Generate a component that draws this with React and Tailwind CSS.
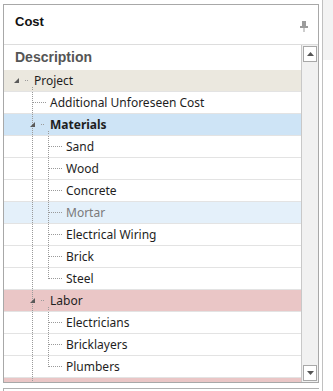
import React from 'react';

const tree = [
  {
    label: 'Project',
    tone: 'root',
    children: [
      { label: 'Additional Unforeseen Cost' },
      {
        label: 'Materials',
        tone: 'selected',
        bold: true,
        children: [
          { label: 'Sand' },
          { label: 'Wood' },
          { label: 'Concrete' },
          { label: 'Mortar', tone: 'hover' },
          { label: 'Electrical Wiring' },
          { label: 'Brick' },
          { label: 'Steel' }
        ]
      },
      {
        label: 'Labor',
        tone: 'labor',
        children: [
          { label: 'Electricians' },
          { label: 'Bricklayers' },
          { label: 'Plumbers' }
        ]
      },
      // scrolled off, only the top edge shows
      { label: '', tone: 'labor' }
    ]
  }
];

const toneClass = {
  root: 'bg-[#ebe8df]',
  selected: 'bg-[#cee4f6]',
  hover: 'bg-[#e4f0fa] text-[#7a7a7a]',
  labor: 'bg-[#eac6c6]'
};

function flatten(nodes, depth, guides, out) {
  nodes.forEach((node, i) => {
    const isLast = i === nodes.length - 1;
    out.push({ ...node, depth, guides, isLast, expander: !!node.children });
    if (node.children) {
      const next = depth >= 1 ? guides.concat(!isLast) : guides;
      flatten(node.children, depth + 1, next, out);
    }
  });
  return out;
}

const rows = flatten(tree, 0, [], []);

function Connector({ row }) {
  const { depth, guides, isLast, expander } = row;
  const w = 30 + depth * 16;
  const base = 16 * (depth - 1);
  const dot = { stroke: '#9a9a9a', strokeWidth: 1, strokeDasharray: '1 1' };
  return (
    <svg width={w} height="21" className="shrink-0">
      {guides.map((on, a) =>
        on ? (
          <line key={a} x1={28.5 + 16 * a} y1="0" x2={28.5 + 16 * a} y2="21" {...dot} />
        ) : null
      )}
      {depth >= 1 && (
        <line
          x1={28.5 + base}
          y1="0"
          x2={28.5 + base}
          y2={isLast && !expander ? 11 : 21}
          {...dot}
        />
      )}
      {depth >= 1 && !expander && (
        <line x1={29 + base} y1="10.5" x2={43 + base} y2="10.5" {...dot} />
      )}
      {expander && (
        <>
          <polygon
            points={`${15 + 16 * depth},8 ${15 + 16 * depth},13 ${10 + 16 * depth},13`}
            fill="#5a5a5a"
          />
          <line x1={21 + 16 * depth} y1="10.5" x2={24 + 16 * depth} y2="10.5" {...dot} />
          <line x1={28.5 + 16 * depth} y1="17" x2={28.5 + 16 * depth} y2="21" {...dot} />
        </>
      )}
    </svg>
  );
}

function Pin() {
  return (
    <svg width="8" height="11" viewBox="0 0 8 11">
      <rect x="2" y="0" width="4" height="6" fill="#9c9c9c" />
      <rect x="0" y="5" width="8" height="2" fill="#9c9c9c" />
      <rect x="3.5" y="7" width="1" height="4" fill="#9c9c9c" />
    </svg>
  );
}

function Arrow({ up }) {
  return (
    <svg width="7" height="4" viewBox="0 0 7 4">
      <polygon points={up ? '3.5,0 7,4 0,4' : '0,0 7,0 3.5,4'} fill="#555" />
    </svg>
  );
}

export default function App() {
  return (
    <div className="w-[333px] h-[391px] bg-white overflow-hidden flex">
      <div className="flex flex-col w-[319px] shrink-0">
        <div className="ml-[3px] mt-[4px] w-[316px] h-[379px] border border-[#a8a8a8] flex flex-col overflow-hidden">
          <div className="h-[40px] border-b border-[#dddddd] flex items-start justify-between pl-[11px] pr-[10px] shrink-0">
            <span
              className="mt-[7px] text-[13px] font-bold text-[#111]"
              style={{ fontFamily: '"Liberation Sans", Arial, sans-serif' }}
            >
              Cost
            </span>
            <span className="mt-[16px]">
              <Pin />
            </span>
          </div>
          <div className="flex flex-1 min-h-0">
            <div className="flex-1 min-w-0 overflow-hidden">
              <div
                className="h-[25px] flex items-center pl-[11px] text-[14px] font-bold text-[#555]"
                style={{ fontFamily: '"Liberation Sans", Arial, sans-serif' }}
              >
                Description
              </div>
              {rows.map((row, i) => (
                <div
                  key={i}
                  className={`h-[22px] flex items-center border-b border-[#e3e3e3] text-[12px] text-[#1e1e1e] ${
                    toneClass[row.tone] || 'bg-white'
                  } ${row.bold ? 'font-bold' : ''}`}
                  style={{ fontFamily: '"Noto Sans", "Open Sans", sans-serif' }}
                >
                  <Connector row={row} />
                  <span className="whitespace-nowrap leading-none">{row.label}</span>
                </div>
              ))}
            </div>
            <div className="w-[17px] shrink-0 border-l border-[#c8c8c8] bg-[#f1f1f1] flex flex-col justify-between items-center py-[1px]">
              <div className="w-[14px] h-[16px] bg-white border border-[#a8a8a8] flex items-center justify-center">
                <Arrow up />
              </div>
              <div className="w-[14px] h-[16px] bg-white border border-[#a8a8a8] flex items-center justify-center">
                <Arrow />
              </div>
            </div>
          </div>
        </div>
        <div className="ml-[3px] mt-[5px] flex-1 border-t border-l border-[#b0b0b0]" />
      </div>
      <div className="ml-[3px] flex-1 border-l border-[#c0c0c0] flex flex-col">
        <div className="h-[60px] bg-[#f3f3f3]" />
      </div>
    </div>
  );
}
